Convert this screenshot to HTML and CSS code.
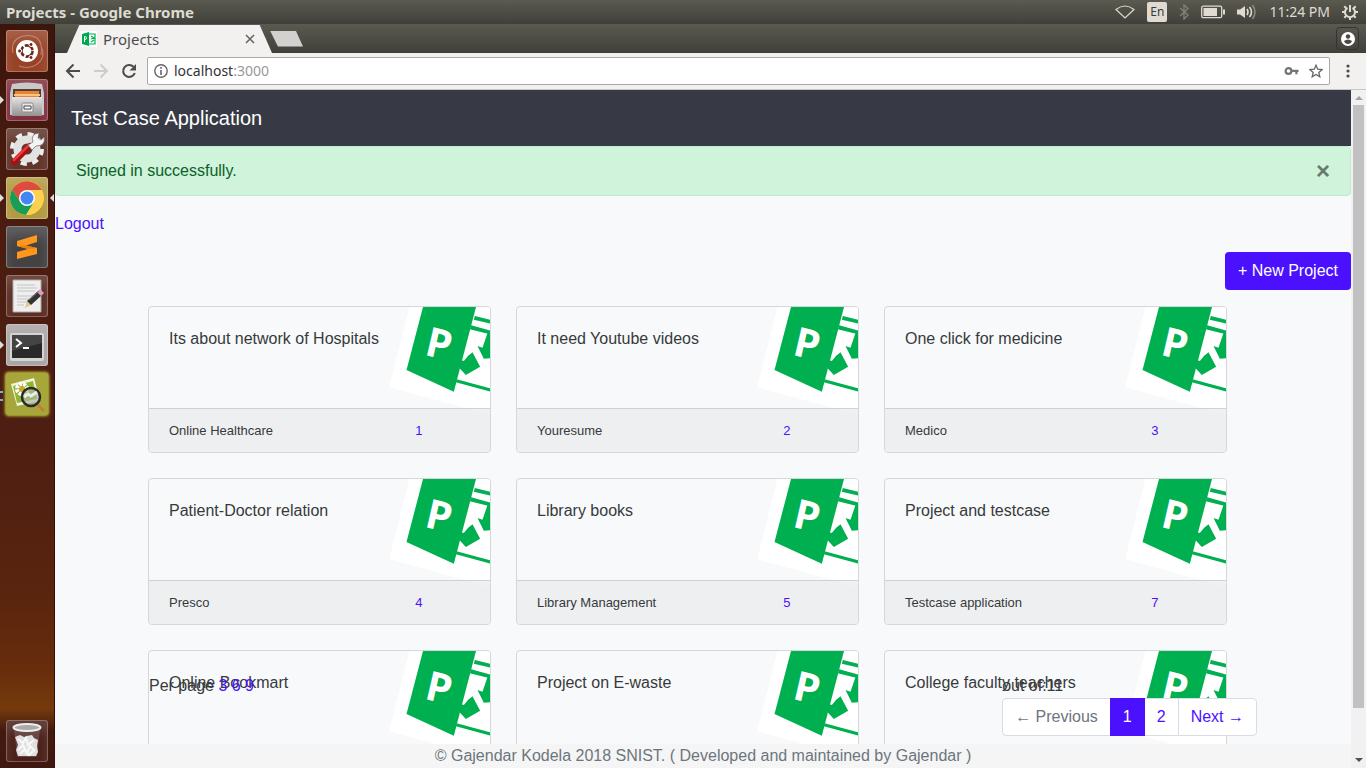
FILE: index.html
```html
<!DOCTYPE html>
<html lang="en">
<head>
<meta charset="utf-8">
<title>Projects</title>
<link rel="stylesheet" href="styles.css">
</head>
<body>
<svg class="defs" aria-hidden="true">
  <defs>
    <symbol id="project-art" viewBox="28 21 302 324">
      <path d="M94 0 H340 V347 L28 262Z" fill="#fff"/>
      <path d="M285 48 340 62 V73 L282 59ZM274 76 340 94 V105 L270 88ZM230 238 340 267 V277 L228 247Z" fill="#00b050"/>
      <path d="M278 157 301 200 258 225 238 203 243 180 252 183 265 167ZM293 138 308 143 323 99 340 103 V174 L312 176Z" fill="#00b050"/>
      <path d="M135 0 H294 L222 275 80 210Z" fill="#00b050"/>
      <text class="art-letter" transform="translate(131 164) rotate(13)" fill="#fff">P</text>
    </symbol>
    <linearGradient id="steel" x2="0" y2="1"><stop stop-color="#e4e4e4"/><stop offset="1" stop-color="#929292"/></linearGradient>
  </defs>
</svg>

<header class="panel">
  <h1 class="panel-title">Projects - Google Chrome</h1>
  <div class="indicators">
    <svg width="20" height="14" viewBox="0 0 20 14"><path d="M1 4.500Q10-2.500 19 4.500L10 13Z" fill="none" stroke="#dfdbd2" stroke-width="1.200"/></svg>
    <span class="lang">En</span>
    <svg width="10" height="16" viewBox="0 0 10 16"><path d="M1 4l8 7-4 4V1l4 3.500L1 12" fill="none" stroke="#858379" stroke-width="1.300"/></svg>
    <svg width="24" height="14" viewBox="0 0 24 14"><rect x=".7" y="1.200" width="20" height="11.500" rx="1.500" fill="none" stroke="#dfdbd2" stroke-width="1.300"/><path d="M2.500 3H16v8H2.500zM22 4.500h2v5h-2z" fill="#dfdbd2"/></svg>
    <svg width="20" height="16" viewBox="0 0 20 16"><path d="M0 5.500h3L8 2v12l-5-3.500H0z" fill="#dfdbd2"/><path d="M10 5q2 3 0 6M12.500 3q4 5 0 10" fill="none" stroke="#dfdbd2" stroke-width="1.600"/><path d="M15.500 1q5 7 0 14" fill="none" stroke="#8d8b81" stroke-width="1.500"/></svg>
    <time class="clock">11:24 PM</time>
    <svg width="16" height="16" viewBox="0 0 16 16"><g fill="none" stroke="#dfdbd2" stroke-width="2"><path d="M5.500 3.800a5 5 0 1 0 5 0M8 1v7"/><path d="M0 8h3M13 8h3M2.300 2.300l2 2M11.700 4.300l2-2M2.300 13.700l2-2M11.700 11.700l2 2M8 13v3"/></g></svg>
  </div>
</header>

<div class="desktop">
  <nav class="launcher" aria-label="Launcher">
    <button class="app ubuntu" aria-label="Dash"><svg viewBox="0 0 42 42"><g fill="none" stroke="#fff" stroke-opacity=".3" stroke-width="1.200"><path d="M7 23C3 7 21 2 31 8q6 5 4 17M35 16c7 15-8 25-22 20"/></g><circle cx="21" cy="21" r="11" fill="#fff"/><circle cx="21" cy="21" r="5.600" fill="none" stroke="#6b2a1c" stroke-width="2.600" stroke-dasharray="10 1.730"/><g fill="#6b2a1c" stroke="#fff"><circle cx="13.600" cy="21" r="2"/><circle cx="25" cy="14.500" r="2"/><circle cx="25" cy="27.500" r="2"/></g></svg></button>
    <button class="app files running" aria-label="Files"><svg viewBox="0 0 42 42"><path d="M6 5q15-3 30 0l2 9v22H4V14z" fill="#c9c9c9"/><path d="M7 10h28v9H7z" fill="#543f32"/><path d="M9 12h24v7H9z" fill="#e8833a"/><path d="M8 15h26v2H8z" fill="#ffc47c"/><path d="M6 18h30v19H6z" fill="url(#steel)"/><rect x="16" y="24" width="11" height="9" rx="1.500" fill="#e9e9e9" stroke="#888"/><path d="M18 27h7v3h-7z" fill="#fff" stroke="#444"/></svg></button>
    <button class="app settings" aria-label="System Settings"><svg viewBox="0 0 42 42"><circle cx="21" cy="21" r="14.500" fill="none" stroke="#ededed" stroke-width="5" stroke-dasharray="6 5.400"/><circle cx="21" cy="21" r="9.500" fill="none" stroke="#e2e2e2" stroke-width="8"/><path d="M8 34 24 18" stroke="#a50f16" stroke-width="6" stroke-linecap="round"/><path d="M8 32 23 17" stroke="#ea3a36" stroke-width="2.500" stroke-linecap="round"/><path d="m22 17 5-3q-3-8 6-9l-1 5 3 2 3-3q2 9-8 9l-4 4z" fill="#f4f4f4" stroke="#777" stroke-width=".8"/></svg></button>
    <button class="app chrome-app running active" aria-label="Google Chrome"><svg viewBox="0 0 42 42"><circle cx="21" cy="21" r="17" fill="#f9ca3e"/><path d="M6.300 12.500A17 17 0 0 1 35.700 13L21 14l-7 11Z" fill="#df4b3f"/><path d="M6.300 12.500A17 17 0 0 0 20 38l8-12-7-5-7 4Z" fill="#189d59"/><path d="M35.700 13H21l7 12-8 13A17 17 0 0 0 35.700 13Z" fill="#fcd14f"/><circle cx="21" cy="21" r="8" fill="#fff"/><circle cx="21" cy="21" r="6.500" fill="#4285f4"/></svg></button>
    <button class="app sublime" aria-label="Sublime Text"><svg viewBox="0 0 42 42"><path d="M11 15 31 9v7l-11 3.500L31 22v6l-20 5v-7l11-3-11-3z" fill="#ff981d"/><path d="m11 20 11 3 9-1-11-2.500z" fill="#e58012"/></svg></button>
    <button class="app editor" aria-label="Text Editor"><svg viewBox="0 0 42 42"><path d="M7 5h28v32H7z" fill="#eee" stroke="#aaa"/><path d="M11 10h18M11 13h20M11 16h18M11 21h19M11 24h14M11 27h10M11 30h7" stroke="#c4c4c4"/><path d="m19 33 2-7 4 4z" fill="#e9c58b"/><path d="m21 26 11-10 4 4-11 10z" fill="#333"/><path d="m31 17 3-3 4 4-3 3z" fill="#df9dbf"/><path d="m23 25 10-9" stroke="#777"/></svg></button>
    <button class="app terminal running" aria-label="Terminal"><svg viewBox="0 0 42 42"><rect x="4" y="9" width="34" height="28" rx="2" fill="#d4d4d4"/><path d="M6 11h30v23H6z" fill="#292929"/><path d="M6 11h30v8L6 27z" fill="#444"/><path d="m10 15 5 4-5 4M17 24h6" fill="none" stroke="#fff" stroke-width="2"/></svg></button>
    <button class="app viewer running-many" aria-label="Image Viewer"><svg viewBox="0 0 42 42"><path d="m5 11 23-6 6 23-23 5z" fill="#f2f4df"/><path d="m7 13 20-5 4 18-20 4z" fill="#91b532"/><circle cx="16" cy="16" r="5" fill="none" stroke="#fff" stroke-width="4" stroke-dasharray="3 1"/><circle cx="16" cy="16" r="2.500" fill="#e69c1c"/><circle cx="25" cy="24" r="9" fill="#a9b7a3" fill-opacity=".65" stroke="#292b26" stroke-width="2.500"/><path d="m18 24 4-3 3 2 6-4" fill="none" stroke="#e9efe4" stroke-width="3"/><path d="m32 32 6 6" stroke="#c77b35" stroke-width="3"/></svg></button>
    <button class="app trash" aria-label="Trash"><svg viewBox="0 0 42 42"><path d="M8 9h26l-3 28H11z" fill="#aaa" fill-opacity=".25"/><ellipse cx="21" cy="7.500" rx="13.500" ry="3.500" fill="#aaa" stroke="#eee" stroke-width="2"/><path d="m9 17 5-2 4 2 3-1 5-1 2 3 4 2-1 6 1 6-2 4H12l-2-6 2-5z" fill="#e0e0e0"/><path d="m12 19 5 4 3-5 2 7 6-5M12 30l5-5 4 8 3-7 5 5M14 34l4-4 5 5 4-4" fill="none" stroke="#f8f8f8" stroke-width="2"/></svg></button>
  </nav>

  <section class="browser">
    <div class="tabstrip">
      <div class="tab">
        <svg width="16" height="16" viewBox="0 0 16 16"><path d="M0 0h16v16H0z" fill="#fff"/><path d="m1 3 7-2v14l-7-2z" fill="#00a94f"/><path d="M8 3h6v10H8M10 5l3 2-3 1M13 9l-3 2" fill="none" stroke="#00b050" stroke-width="1.200"/><path d="M3.500 11V5.500h1.200q1.800 1.500 0 3H3.500" fill="none" stroke="#fff"/></svg>
        <span class="tab-name">Projects</span>
        <button class="icon-btn" aria-label="Close tab"><svg width="10" height="10" viewBox="0 0 10 10"><path d="m1 1 8 8m0-8L1 9" stroke="#666" stroke-width="1.600"/></svg></button>
      </div>
      <button class="new-tab" aria-label="New tab"></button>
      <button class="profile" aria-label="Profile"><svg width="14" height="14" viewBox="0 0 14 14"><circle cx="7" cy="7" r="7" fill="#fff"/><circle cx="7" cy="4.500" r="2.200" fill="#4a4a43"/><path d="M3 9q4-3 8 0-1 3-4 3T3 9Z" fill="#4a4a43"/></svg></button>
    </div>
    <div class="toolbar">
      <button class="icon-btn" aria-label="Back"><svg width="16" height="16" viewBox="0 0 16 16"><path d="M15 8H2m6.500-6.500L2 8l6.500 6.500" fill="none" stroke="#4c4c4c" stroke-width="2"/></svg></button>
      <button class="icon-btn" aria-label="Forward"><svg width="16" height="16" viewBox="0 0 16 16"><path d="M1 8h13M7.500 1.500 14 8l-6.500 6.500" fill="none" stroke="#ccc" stroke-width="2"/></svg></button>
      <button class="icon-btn" aria-label="Reload"><svg width="16" height="16" viewBox="0 0 16 16"><path d="M13.800 10a6 6 0 1 1-1.300-6.200" fill="none" stroke="#4c4c4c" stroke-width="2.100"/><path d="M15 1v6.500H8.500z" fill="#4c4c4c"/></svg></button>
      <div class="omnibox">
        <svg width="14" height="14" viewBox="0 0 14 14"><circle cx="7" cy="7" r="6.200" fill="none" stroke="#666" stroke-width="1.400"/><path d="M7 6v5M7 3v1.700" stroke="#666" stroke-width="1.600"/></svg>
        <span class="url">localhost<span class="port">:3000</span></span>
        <button class="icon-btn" aria-label="Saved passwords"><svg width="15" height="10" viewBox="0 0 15 10"><circle cx="4.500" cy="5" r="2.900" fill="none" stroke="#757575" stroke-width="2.200"/><path d="M8 3.700h6.500v2.300h-1v2.200h-2.200V6H8z" fill="#757575"/></svg></button>
        <button class="icon-btn" aria-label="Bookmark"><svg width="14" height="14" viewBox="0 0 14 14"><path d="m7 1.200 1.700 4 4.400.4-3.300 2.900 1 4.300L7 10.500l-3.800 2.300 1-4.300L.9 5.600l4.400-.4z" fill="none" stroke="#666" stroke-width="1.300"/></svg></button>
      </div>
      <button class="icon-btn" aria-label="Menu"><svg width="4" height="14" viewBox="0 0 4 14"><g fill="#4c4c4c"><circle cx="2" cy="2" r="1.600"/><circle cx="2" cy="7" r="1.600"/><circle cx="2" cy="12" r="1.600"/></g></svg></button>
    </div>

    <div class="viewport">
      <div class="page">
        <header class="navbar"><a class="brand" href="#">Test Case Application</a></header>
        <main class="content">
          <div class="alert" role="alert">
            <span>Signed in successfully.</span>
            <button class="close" aria-label="Close">×</button>
          </div>
          <p class="logout"><a href="#">Logout</a></p>
          <div class="actions"><a class="btn" href="#">+ New Project</a></div>
          <div class="container cards">
            <article class="card"><svg class="art"><use href="#project-art"/></svg><div class="card-body">Its about network of Hospitals</div><div class="card-footer"><span>Online Healthcare</span><a href="#">1</a></div></article>
            <article class="card"><svg class="art"><use href="#project-art"/></svg><div class="card-body">It need Youtube videos</div><div class="card-footer"><span>Youresume</span><a href="#">2</a></div></article>
            <article class="card"><svg class="art"><use href="#project-art"/></svg><div class="card-body">One click for medicine</div><div class="card-footer"><span>Medico</span><a href="#">3</a></div></article>
            <article class="card"><svg class="art"><use href="#project-art"/></svg><div class="card-body">Patient-Doctor relation</div><div class="card-footer"><span>Presco</span><a href="#">4</a></div></article>
            <article class="card"><svg class="art"><use href="#project-art"/></svg><div class="card-body">Library books</div><div class="card-footer"><span>Library Management</span><a href="#">5</a></div></article>
            <article class="card"><svg class="art"><use href="#project-art"/></svg><div class="card-body">Project and testcase</div><div class="card-footer"><span>Testcase application</span><a href="#">7</a></div></article>
            <article class="card"><svg class="art"><use href="#project-art"/></svg><div class="card-body">Online Bookmart</div></article>
            <article class="card"><svg class="art"><use href="#project-art"/></svg><div class="card-body">Project on E-waste</div></article>
            <article class="card"><svg class="art"><use href="#project-art"/></svg><div class="card-body">College faculty teachers</div></article>
          </div>
        </main>
        <div class="pager-layer">
          <div class="container pager">
            <div>Per page <a href="#">3</a> <a href="#">6</a> <a href="#">9</a></div>
            <div>
              <div>out of:11</div>
              <nav class="pagination" aria-label="Pages"><span class="page-link muted">← Previous</span><a class="page-link current" href="#">1</a><a class="page-link" href="#">2</a><a class="page-link" href="#">Next →</a></nav>
            </div>
          </div>
        </div>
        <footer class="footer">© Gajendar Kodela 2018 SNIST. ( Developed and maintained by Gajendar )</footer>
      </div>
      <div class="scrollbar" aria-hidden="true">
        <svg width="8" height="4" viewBox="0 0 8 4"><path d="m0 4 4-4 4 4z" fill="#a3a3a3"/></svg>
        <div class="track"><div class="thumb"></div></div>
        <svg width="8" height="4" viewBox="0 0 8 4"><path d="m0 0 4 4 4-4z" fill="#505050"/></svg>
      </div>
    </div>
  </section>
</div>
</body>
</html>
```
FILE: styles.css
```css
* { box-sizing: border-box; }
body {
  margin: 0;
  height: 100vh;
  display: flex;
  flex-direction: column;
  overflow: hidden;
  font-family: "Liberation Sans", Arial, sans-serif;
  font-size: 16px;
  line-height: 24px;
  color: #373a3c;
}
button { border: 0; padding: 0; background: none; font: inherit; cursor: pointer; }
svg { display: block; flex: none; }
a { color: #4b11ff; text-decoration: none; }
.defs { position: absolute; width: 0; height: 0; }

/* System panel */
.panel {
  display: flex;
  align-items: center;
  justify-content: space-between;
  height: 24px;
  flex: none;
  padding: 0 8px 0 6px;
  background: linear-gradient(#5b5a50, #403f3a);
  color: #dfdbd2;
  font-family: "Noto Sans", sans-serif;
  font-size: 14px;
}
.panel-title { margin: 0; font-size: 15px; font-weight: 700; }
.indicators { display: flex; align-items: center; gap: 12px; }
.lang {
  width: 20px;
  height: 20px;
  border-radius: 2px;
  background: #dfdbd2;
  color: #3c3b37;
  font-size: 12px;
  line-height: 20px;
  text-align: center;
}

.desktop { flex: 1; min-height: 0; display: flex; }

/* Launcher */
.launcher {
  width: 55px;
  flex: none;
  display: flex;
  flex-direction: column;
  gap: 7px;
  padding: 6px 7px 6px 6px;
  border-right: 1px solid #32100a;
  background: linear-gradient(#3c150b, #4a1b0f 20%, #4e1e12 55%, #58240f 75%, #662c0c 86%, #743a0c 92%, #431a10 95%, #40180f);
}
.app {
  position: relative;
  width: 42px;
  height: 42px;
  flex: none;
  border-radius: 3px;
  box-shadow: inset 0 0 0 1px rgba(255, 255, 255, .25), inset 0 10px 12px rgba(255, 255, 255, .15);
}
.app svg { width: 42px; height: 42px; }
.ubuntu { background: #984328; }
.files { background: #80303e; }
.settings { background: #61352a; }
.chrome-app { background: #b29a42; }
.sublime { background: #454243; }
.editor { background: #5c2d22; }
.terminal { background: #aaa5a4; }
.viewer { background: #a7a63b; box-shadow: 0 0 3px 1px #c9d23a; }
.trash { margin-top: auto; background: #4c2119; }
.running::before, .active::after {
  content: "";
  position: absolute;
  top: 17px;
  left: -6px;
  border: 4px solid transparent;
  border-left-color: #dedede;
  border-right-width: 0;
}
.active::after {
  left: auto;
  right: -6px;
  border: 4px solid transparent;
  border-right-color: #dedede;
  border-left-width: 0;
}
.running-many::before {
  content: "";
  position: absolute;
  top: 18px;
  left: -6px;
  width: 3px;
  height: 6px;
  border: solid #6cb5dc;
  border-width: 2px 0;
}

/* Browser frame */
.browser { flex: 1; min-width: 0; display: flex; flex-direction: column; }
.tabstrip {
  display: flex;
  align-items: center;
  height: 29px;
  flex: none;
  padding: 0 7px 0 12px;
  background: linear-gradient(#5b5a50, #403f3a);
}
.tab {
  display: flex;
  align-items: center;
  gap: 6px;
  width: 205px;
  height: 28px;
  align-self: flex-end;
  padding: 0 17px 0 14px;
  background: #f2f1f0;
  clip-path: polygon(6% 0, 94% 0, 100% 100%, 0 100%);
  font-family: "Noto Sans", sans-serif;
  font-size: 15px;
  color: #4c4c4c;
}
.tab-name { flex: 1; }
.new-tab {
  width: 33px;
  height: 16px;
  margin: 0 auto 0 -2px;
  background: #d2d1d0;
  clip-path: polygon(0 0, 78% 0, 100% 100%, 24% 100%);
}
.profile {
  display: grid;
  place-items: center;
  width: 23px;
  height: 23px;
  border: 1px solid #35342f;
  border-radius: 4px;
}
.toolbar {
  display: flex;
  align-items: center;
  gap: 12px;
  height: 37px;
  flex: none;
  padding: 0 16px 1px 10px;
  background: #f2f1f0;
  border-bottom: 1px solid #c8c8c7;
}
.icon-btn { display: grid; place-items: center; flex: none; }
.omnibox {
  flex: 1;
  display: flex;
  align-items: center;
  gap: 10px;
  height: 28px;
  margin: 0 4px 0 -2px;
  padding: 0 6px;
  border: 1px solid #a9a8a7;
  border-radius: 2px;
  background: #fff;
}
.url {
  flex: 1;
  margin-left: -4px;
  font-family: "Noto Sans", sans-serif;
  font-size: 14px;
  color: #333;
}
.port { color: #999; }

.viewport { flex: 1; min-height: 0; display: flex; }
.scrollbar {
  width: 15px;
  flex: none;
  display: flex;
  flex-direction: column;
  align-items: center;
  gap: 5px;
  padding: 6px 0;
  background: #f1f1f1;
}
.track { flex: 1; width: 11px; }
.thumb { height: 93%; background: #c1c1c1; }

/* Web page */
.page {
  position: relative;
  flex: 1;
  min-width: 0;
  display: flex;
  flex-direction: column;
  background: #f8f9fb;
}
.navbar { flex: none; padding: 16px; background: #373a44; }
.brand { display: block; color: #fff; font-size: 20px; }
.content { flex: 1; min-height: 0; overflow: hidden; }
.alert {
  display: flex;
  justify-content: space-between;
  align-items: center;
  padding: 12px 20px;
  border: 1px solid #bdebcb;
  border-radius: 4px;
  background: #cff3db;
  color: #0b6126;
}
.close { height: 24px; font-size: 24px; font-weight: 700; line-height: 24px; color: #68796e; }
.logout { margin: 16px 0; }
.actions { display: flex; justify-content: flex-end; margin-bottom: 16px; }
.btn {
  padding: 7px 13px;
  border-radius: 4px;
  background: #4b11ff;
  color: #fff;
}
.container { width: 100%; max-width: 1110px; margin: 0 auto; }
.cards {
  display: grid;
  grid-template-columns: repeat(3, 1fr);
  gap: 25px;
  padding-right: 31px;
}
.card {
  position: relative;
  display: flex;
  flex-direction: column;
  overflow: hidden;
  min-height: 147px;
  border: 1px solid #d5d7da;
  border-radius: 4px;
}
.art { position: absolute; top: 0; right: 0; width: 101px; height: 108px; }
.art-letter { font-family: "Open Sans", sans-serif; font-size: 122px; font-weight: 700; }
.card-body { position: relative; flex: 1; padding: 20px; }
.card-footer {
  position: relative;
  display: grid;
  grid-template-columns: 9fr 2fr;
  padding: 12px 20px;
  border-top: 1px solid #cfd1d4;
  background: rgba(234, 235, 237, .7);
  font-size: 13px;
  line-height: 19px;
}
.pager-layer { position: absolute; left: 0; right: 0; bottom: 32px; }
.pager { display: flex; justify-content: space-between; padding: 0 1px; }
.pagination { display: flex; }
.page-link {
  margin-left: -1px;
  padding: 8px 12px;
  border: 1px solid #d9dce5;
  background: #fff;
  line-height: 20px;
}
.page-link:first-child { margin-left: 0; border-radius: 4px 0 0 4px; }
.page-link:last-child { border-radius: 0 4px 4px 0; }
.muted { color: #6c757d; }
.current { position: relative; border-color: #4b11ff; background: #4b11ff; color: #fff; }
.footer {
  position: relative;
  flex: none;
  background: #f5f5f5;
  color: #6c757d;
  text-align: center;
}
```
